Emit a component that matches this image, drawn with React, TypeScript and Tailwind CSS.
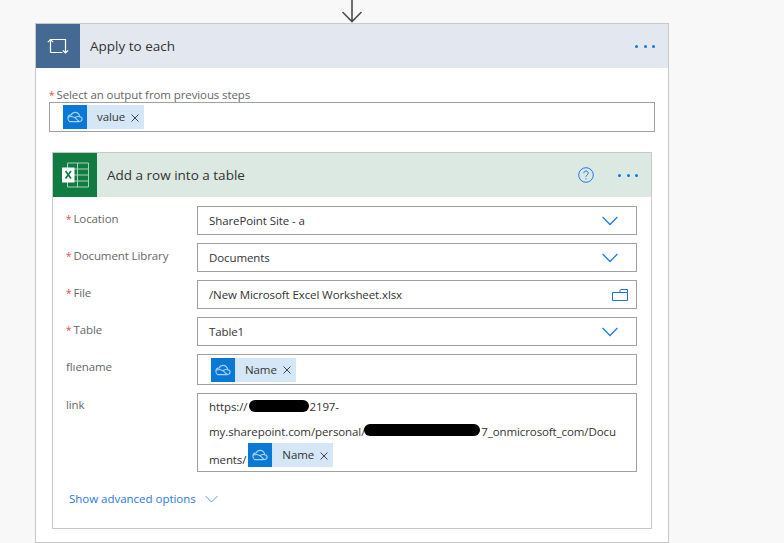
import React from "react";

const font = { fontFamily: '"Open Sans", "Noto Sans", sans-serif' };

function Cloud() {
  return (
    <svg width="16" height="12" viewBox="0 0 16 12" fill="none" stroke="#a9d2f2" strokeWidth="1.1">
      <path d="M2.6 10.6 h9.6 c1.6 0 2.9-1.1 2.9-2.5 0-1.3-1-2.3-2.3-2.4 C12.300 3.500 10.500 1.400 8.200 1.400 c-1.800 0-3.300 1-4 2.500 C2.300 4 .9 5.300 .9 7.200 c0 .9 .4 2.500 1.700 3.400z" />
      <path d="M1.200 6.200 C4 5 6.500 5.500 8.500 7.200 L12 10.400 M8 6.500 C9.500 5.500 11.500 5.200 13 5.800" />
    </svg>
  );
}

function Chip({ label }: { label: string }) {
  return (
    <span className="inline-flex h-6 items-stretch bg-[#d5e7f6] align-top">
      <span className="flex w-6 items-center justify-center bg-[#0a78d5]">
        <Cloud />
      </span>
      <span className="flex items-center pl-[10px] pr-[5px] text-[11.5px] tracking-[-0.1px] text-[#333]">
        {label}
        <svg className="ml-[6px] mt-[1px]" width="8" height="8" viewBox="0 0 8 8" stroke="#444" strokeWidth="1">
          <path d="M.5 .5l7 7M7.500 .5l-7 7" />
        </svg>
      </span>
    </span>
  );
}

function Dots() {
  return (
    <span className="flex w-[20px] justify-between">
      <span className="size-[3px] rounded-full bg-[#0a78e8]" />
      <span className="size-[3px] rounded-full bg-[#0a78e8]" />
      <span className="size-[3px] rounded-full bg-[#0a78e8]" />
    </span>
  );
}

function Chevron() {
  return (
    <svg width="16" height="10" viewBox="0 0 16 10" fill="none" stroke="#1f7ae8" strokeWidth="1.300">
      <path d="M.6 1l7.400 7.500L15.400 1" />
    </svg>
  );
}

function Folder() {
  return (
    <svg className="-mr-[10px]" width="16" height="12" viewBox="0 0 16 12" fill="none" stroke="#1f6fe8" strokeWidth="1">
      <path d="M.5 3.500h15v8H.5zM8 3.500V1.500q0-1 1-1h6.500v3" />
    </svg>
  );
}

function Label({ req, text, tight }: { req?: boolean; text: string; tight?: boolean }) {
  return (
    <div className={tight ? "w-[131px] shrink-0 pt-[4px] text-[11.5px] leading-[16px] tracking-[-0.1px] text-[#666]" : "w-[131px] shrink-0 pt-[5px] text-[11.5px] leading-[16px] tracking-[-0.1px] text-[#666]"}>
      {req && <span className="mr-[2px] text-[10px] text-[#e0484e]">*</span>}
      {text}
    </div>
  );
}

function Row({ req, label, value, icon }: { req?: boolean; label: string; value: string; icon: React.ReactNode }) {
  return (
    <div className="flex">
      <Label req={req} text={label} />
      <div className="flex h-[29px] flex-1 items-center justify-between border border-[#a0a0a0] bg-white pl-[11px] pr-[18px] text-[11.5px] tracking-[-0.1px] text-[#333]">
        <span>{value}</span>
        {icon}
      </div>
    </div>
  );
}

export default function App() {
  return (
    <div className="h-[543px] w-[784px] overflow-hidden bg-[#f8f8f8]" style={font}>
      <div className="ml-[35px] flex h-[23px] w-[634px] justify-center">
        <svg width="22" height="23" viewBox="0 0 22 23" fill="none" stroke="#4d4d4d" strokeWidth="1.600">
          <path d="M11 0v21.500M1.500 12l9.500 9.500L20.500 12" />
        </svg>
      </div>

      <div className="ml-[35px] h-[520px] w-[634px] border border-[#c8c8c8] bg-white">
        <div className="flex h-11 items-center bg-[#e3e8f0]">
          <div className="flex size-11 items-center justify-center bg-[#446a94]">
            <svg width="22" height="16" viewBox="0 0 22 16" fill="none" stroke="#fff" strokeWidth="1.200">
              <path d="M3.500 14.500V1.500H18.500V15M0.800 4.200l2.700-2.700 2.700 2.700M15.800 12.300l2.700 2.700 2.700-2.700M3.500 14.500H15.500" />
            </svg>
          </div>
          <span className="ml-[10px] flex-1 text-[13.5px] text-[#333]">Apply to each</span>
          <span className="mr-[13px]"><Dots /></span>
        </div>

        <div className="px-[13px] pt-[18px]">
          <div className="h-4 text-[11.5px] leading-[18px] tracking-[-0.1px] text-[#666]">
            <span className="mr-[2px] text-[10px] text-[#e0484e]">*</span>Select an output from previous steps
          </div>
          <div className="flex h-[30px] items-center border border-[#a0a0a0] pl-[13px]">
            <Chip label="value" />
          </div>
        </div>

        <div className="ml-4 mt-5 h-[377px] w-[600px] border border-[#c8c8c8] bg-white">
          <div className="flex h-11 items-center bg-[#dce9e2]">
            <div className="flex size-11 items-center justify-center bg-[#107c41]">
              <svg width="28" height="26" viewBox="0 0 28 26" fill="none">
                <path d="M6.500 1h21v24h-21z" stroke="#a9d3ba" strokeWidth="1" />
                <path d="M6.500 7h21M6.500 13h21M6.500 19h21M16.500 1v24" stroke="#a9d3ba" strokeWidth="1" />
                <path d="M1 5.500h12.500v15H1z" fill="#fff" />
                <path d="M4.500 9l5.500 7.500M10 9l-5.500 7.500" stroke="#107c41" strokeWidth="1.700" />
              </svg>
            </div>
            <span className="ml-[10px] flex-1 text-[13.5px] text-[#333]">Add a row into a table</span>
            <svg className="mr-[24px]" width="16" height="16" viewBox="0 0 16 16" fill="none" stroke="#1f7ae8" strokeWidth="1">
              <circle cx="8" cy="8" r="7.300" />
              <path d="M5.800 6.200C5.800 4.800 6.800 4 8 4s2.200.8 2.200 2.100c0 1.800-2.200 1.800-2.200 3.700" />
              <path d="M8 11.200v1.200" />
            </svg>
            <span className="mr-[13px]"><Dots /></span>
          </div>

          <div className="flex flex-col gap-2 pl-[13px] pr-[14px] pt-[9px]">
            <Row req label="Location" value="SharePoint Site - a" icon={<Chevron />} />
            <Row req label="Document Library" value="Documents" icon={<Chevron />} />
            <Row req label="File" value="/New Microsoft Excel Worksheet.xlsx" icon={<Folder />} />
            <Row req label="Table" value="Table1" icon={<Chevron />} />
            <div className="flex">
              <Label text="flıename" />
              <div className="flex h-[31px] flex-1 items-center border border-[#a0a0a0] pl-[13px]">
                <Chip label="Name" />
              </div>
            </div>
            <div className="flex">
              <Label tight text="link" />
              <div className="h-[79px] flex-1 border border-[#a0a0a0] pl-[11px] text-[11.5px] tracking-[-0.1px] text-[#333]">
                <div className="flex h-[26px] items-center">
                  https://
                  <span className="relative inline-block h-4 w-[62px]">
                    <span className="absolute left-[2px] top-[1px] h-[12px] w-[60px] rounded-full bg-black" />
                  </span>
                  2197-
                </div>
                <div className="flex h-[24px] items-center">
                  my.sharepoint.com/personal/
                  <span className="relative inline-block h-4 w-[116px]">
                    <span className="absolute -left-[1px] top-0 h-[12px] w-[116px] rounded-full bg-black" />
                  </span>
                  7_onmicrosoft_com/Docu
                </div>
                <div className="-mt-[1px] flex h-6 items-end">
                  <span className="-mb-[1px] mr-[2px]">ments/</span>
                  <Chip label="Name" />
                </div>
              </div>
            </div>
          </div>

          <div className="ml-4 mt-[18px] flex items-center gap-[9px] text-[11.5px] tracking-[-0.02px] text-[#1f7ae8]">
            Show advanced options
            <svg width="13" height="8" viewBox="0 0 13 8" fill="none" stroke="#5a9ce8" strokeWidth="1">
              <path d="M.5 1l6 6 6-6" />
            </svg>
          </div>
        </div>
      </div>
    </div>
  );
}
